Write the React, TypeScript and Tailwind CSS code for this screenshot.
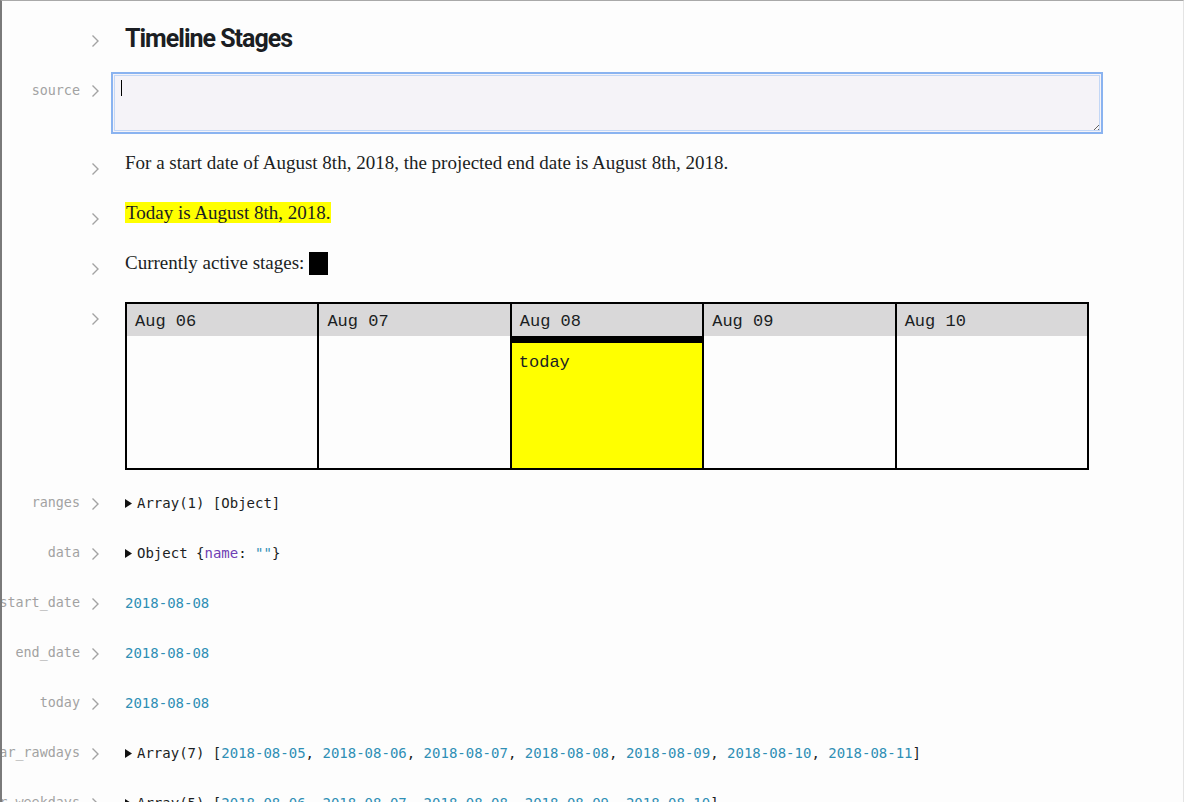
import React from "react";

const mono = "font-['DejaVu_Sans_Mono',monospace]";
const serif = "font-['Liberation_Serif',serif]";
const courier = "font-['Liberation_Mono',monospace]";

const Chevron = () => (
  <svg width="9" height="14" viewBox="0 0 9 14" className="block">
    <polyline points="1.5,1.5 7,7 1.5,12.5" fill="none" stroke="#a3a3a3" strokeWidth="1.4" />
  </svg>
);

const Caret = () => (
  <svg width="7" height="9" viewBox="0 0 7 9" className="inline-block mr-[5px] align-[0px]">
    <polygon points="0,0 7,4.5 0,9" fill="#111" />
  </svg>
);

// one notebook cell: label, chevron, content
const Cell = ({
  label,
  children,
  className = "",
  mode = "top",
}: {
  label?: string;
  children: React.ReactNode;
  className?: string;
  mode?: "top" | "center";
}) => (
  <div className={`flex ${mode === "center" ? "items-center" : "items-start"} ${className}`}>
    <div
      className={`w-[80px] shrink-0 flex justify-end whitespace-nowrap text-[13.4px] text-[#a2a2a2] ${mono} ${
        mode === "top" ? "pt-[14px]" : ""
      }`}
    >
      {label}
    </div>
    <div className={`w-[45px] shrink-0 pl-[11px] ${mode === "top" ? "pt-[24px]" : "pt-[1px]"}`}>
      <Chevron />
    </div>
    <div className="flex-1 min-w-0">{children}</div>
  </div>
);

const Date = ({ d }: { d: string }) => <span className="text-[#2f8fb5]">{d}</span>;

const days = ["Aug 06", "Aug 07", "Aug 08", "Aug 09", "Aug 10"];

const DateList = ({ list }: { list: string[] }) => (
  <>
    {list.map((d, i) => (
      <React.Fragment key={d}>
        <Date d={d} />
        {i < list.length - 1 ? ", " : ""}
      </React.Fragment>
    ))}
  </>
);

export default function App() {
  return (
    <div className="h-[802px] overflow-hidden bg-[#fdfdfd] border-t border-t-[#a9a9a9] border-l-2 border-l-[#7a7a7a] border-r border-r-[#e4e4e4] text-[#1b1e23]">
      <div className="w-[1103px] -ml-[2px]">
        {/* title */}
        <div className="flex items-start h-[70px]">
          <div className="w-[80px] shrink-0" />
          <div className="w-[45px] shrink-0 pl-[11px] pt-[33px]">
            <Chevron />
          </div>
          <h1 className="pt-[23px] text-[25px] leading-[30px] font-bold font-['Roboto',sans-serif] tracking-[-1px]">
            Timeline Stages
          </h1>
        </div>

        {/* source textarea */}
        <div className="flex items-start h-[67px]">
          <div className={`w-[80px] shrink-0 flex justify-end pt-[10px] text-[13.4px] text-[#a2a2a2] ${mono}`}>source</div>
          <div className="w-[45px] shrink-0 pl-[11px] pt-[13px]">
            <Chevron />
          </div>
          <div className="flex-1 relative pt-[1px]">
            <textarea
              readOnly
              className="block -ml-[14px] w-[992px] h-[62px] resize-y bg-[#f5f3f8] border-2 border-[#8ab3f0] outline outline-1 outline-[#c3d7f6] -outline-offset-4 px-[8px] py-[6px]"
            />
            <div className="absolute left-[-4px] top-[9px] w-[1px] h-[16px] bg-black" />
          </div>
        </div>

        <Cell className="h-[50px]">
          <p className={`${serif} text-[19px] leading-[24px] pt-[13px]`}>
            For a start date of August 8th, 2018, the projected end date is August 8th, 2018.
          </p>
        </Cell>

        <Cell className="h-[50px]">
          <p className={`${serif} text-[19px] leading-[24px] pt-[13px]`}>
            <span className="bg-[#ffff00] pl-[1px]">Today is August 8th, 2018.</span>
          </p>
        </Cell>

        <Cell className="h-[50px]">
          <p className={`${serif} text-[19px] leading-[24px] pt-[13px] flex items-center`}>
            Currently active stages:
            <span className="inline-block w-[19px] h-[23px] bg-black ml-[5px]" />
          </p>
        </Cell>

        {/* timeline table */}
        <Cell className="h-[190px]">
          <div className="pt-[14px]">
            <div className="flex w-[964px] h-[168px] border-2 border-black">
              {days.map((d, i) => (
                <div key={d} className={`flex-1 flex flex-col ${i > 0 ? "border-l-2 border-black" : ""}`}>
                  <div className={`h-[32px] shrink-0 bg-[#d9d8d9] pl-[8px] pt-[3px] flex items-center text-[17px] ${courier}`}>
                    {d}
                  </div>
                  {d === "Aug 08" ? (
                    <div className="flex-1 flex flex-col">
                      <div className="h-[7px] bg-black" />
                      <div className={`flex-1 bg-[#ffff00] pl-[7px] pt-[9px] text-[17px] leading-[22px] ${courier}`}>
                        today
                      </div>
                    </div>
                  ) : (
                    <div className="flex-1" />
                  )}
                </div>
              ))}
            </div>
          </div>
        </Cell>

        <div className={`${mono} text-[14px] leading-[20px]`}>
          <Cell label="ranges" mode="center" className="h-[50px]">
            <span className="whitespace-nowrap">
              <Caret />
              Array(1) [Object]
            </span>
          </Cell>
          <Cell label="data" mode="center" className="h-[50px]">
            <span className="whitespace-nowrap">
              <Caret />
              Object {"{"}
              <span className="text-[#6f3fb4]">name</span>: <span className="text-[#2f8fb5]">""</span>
              {"}"}
            </span>
          </Cell>
          <Cell label="start_date" mode="center" className="h-[50px]">
            <Date d="2018-08-08" />
          </Cell>
          <Cell label="end_date" mode="center" className="h-[50px]">
            <Date d="2018-08-08" />
          </Cell>
          <Cell label="today" mode="center" className="h-[50px]">
            <Date d="2018-08-08" />
          </Cell>
          <Cell label="calendar_rawdays" mode="center" className="h-[50px]">
            <span className="whitespace-nowrap">
              <Caret />
              Array(7) [
              <DateList
                list={["2018-08-05", "2018-08-06", "2018-08-07", "2018-08-08", "2018-08-09", "2018-08-10", "2018-08-11"]}
              />
              ]
            </span>
          </Cell>
          <Cell label="calendar_weekdays" mode="center" className="h-[50px]">
            <span className="whitespace-nowrap">
              <Caret />
              Array(5) [
              <DateList list={["2018-08-06", "2018-08-07", "2018-08-08", "2018-08-09", "2018-08-10"]} />]
            </span>
          </Cell>
        </div>
      </div>
    </div>
  );
}
